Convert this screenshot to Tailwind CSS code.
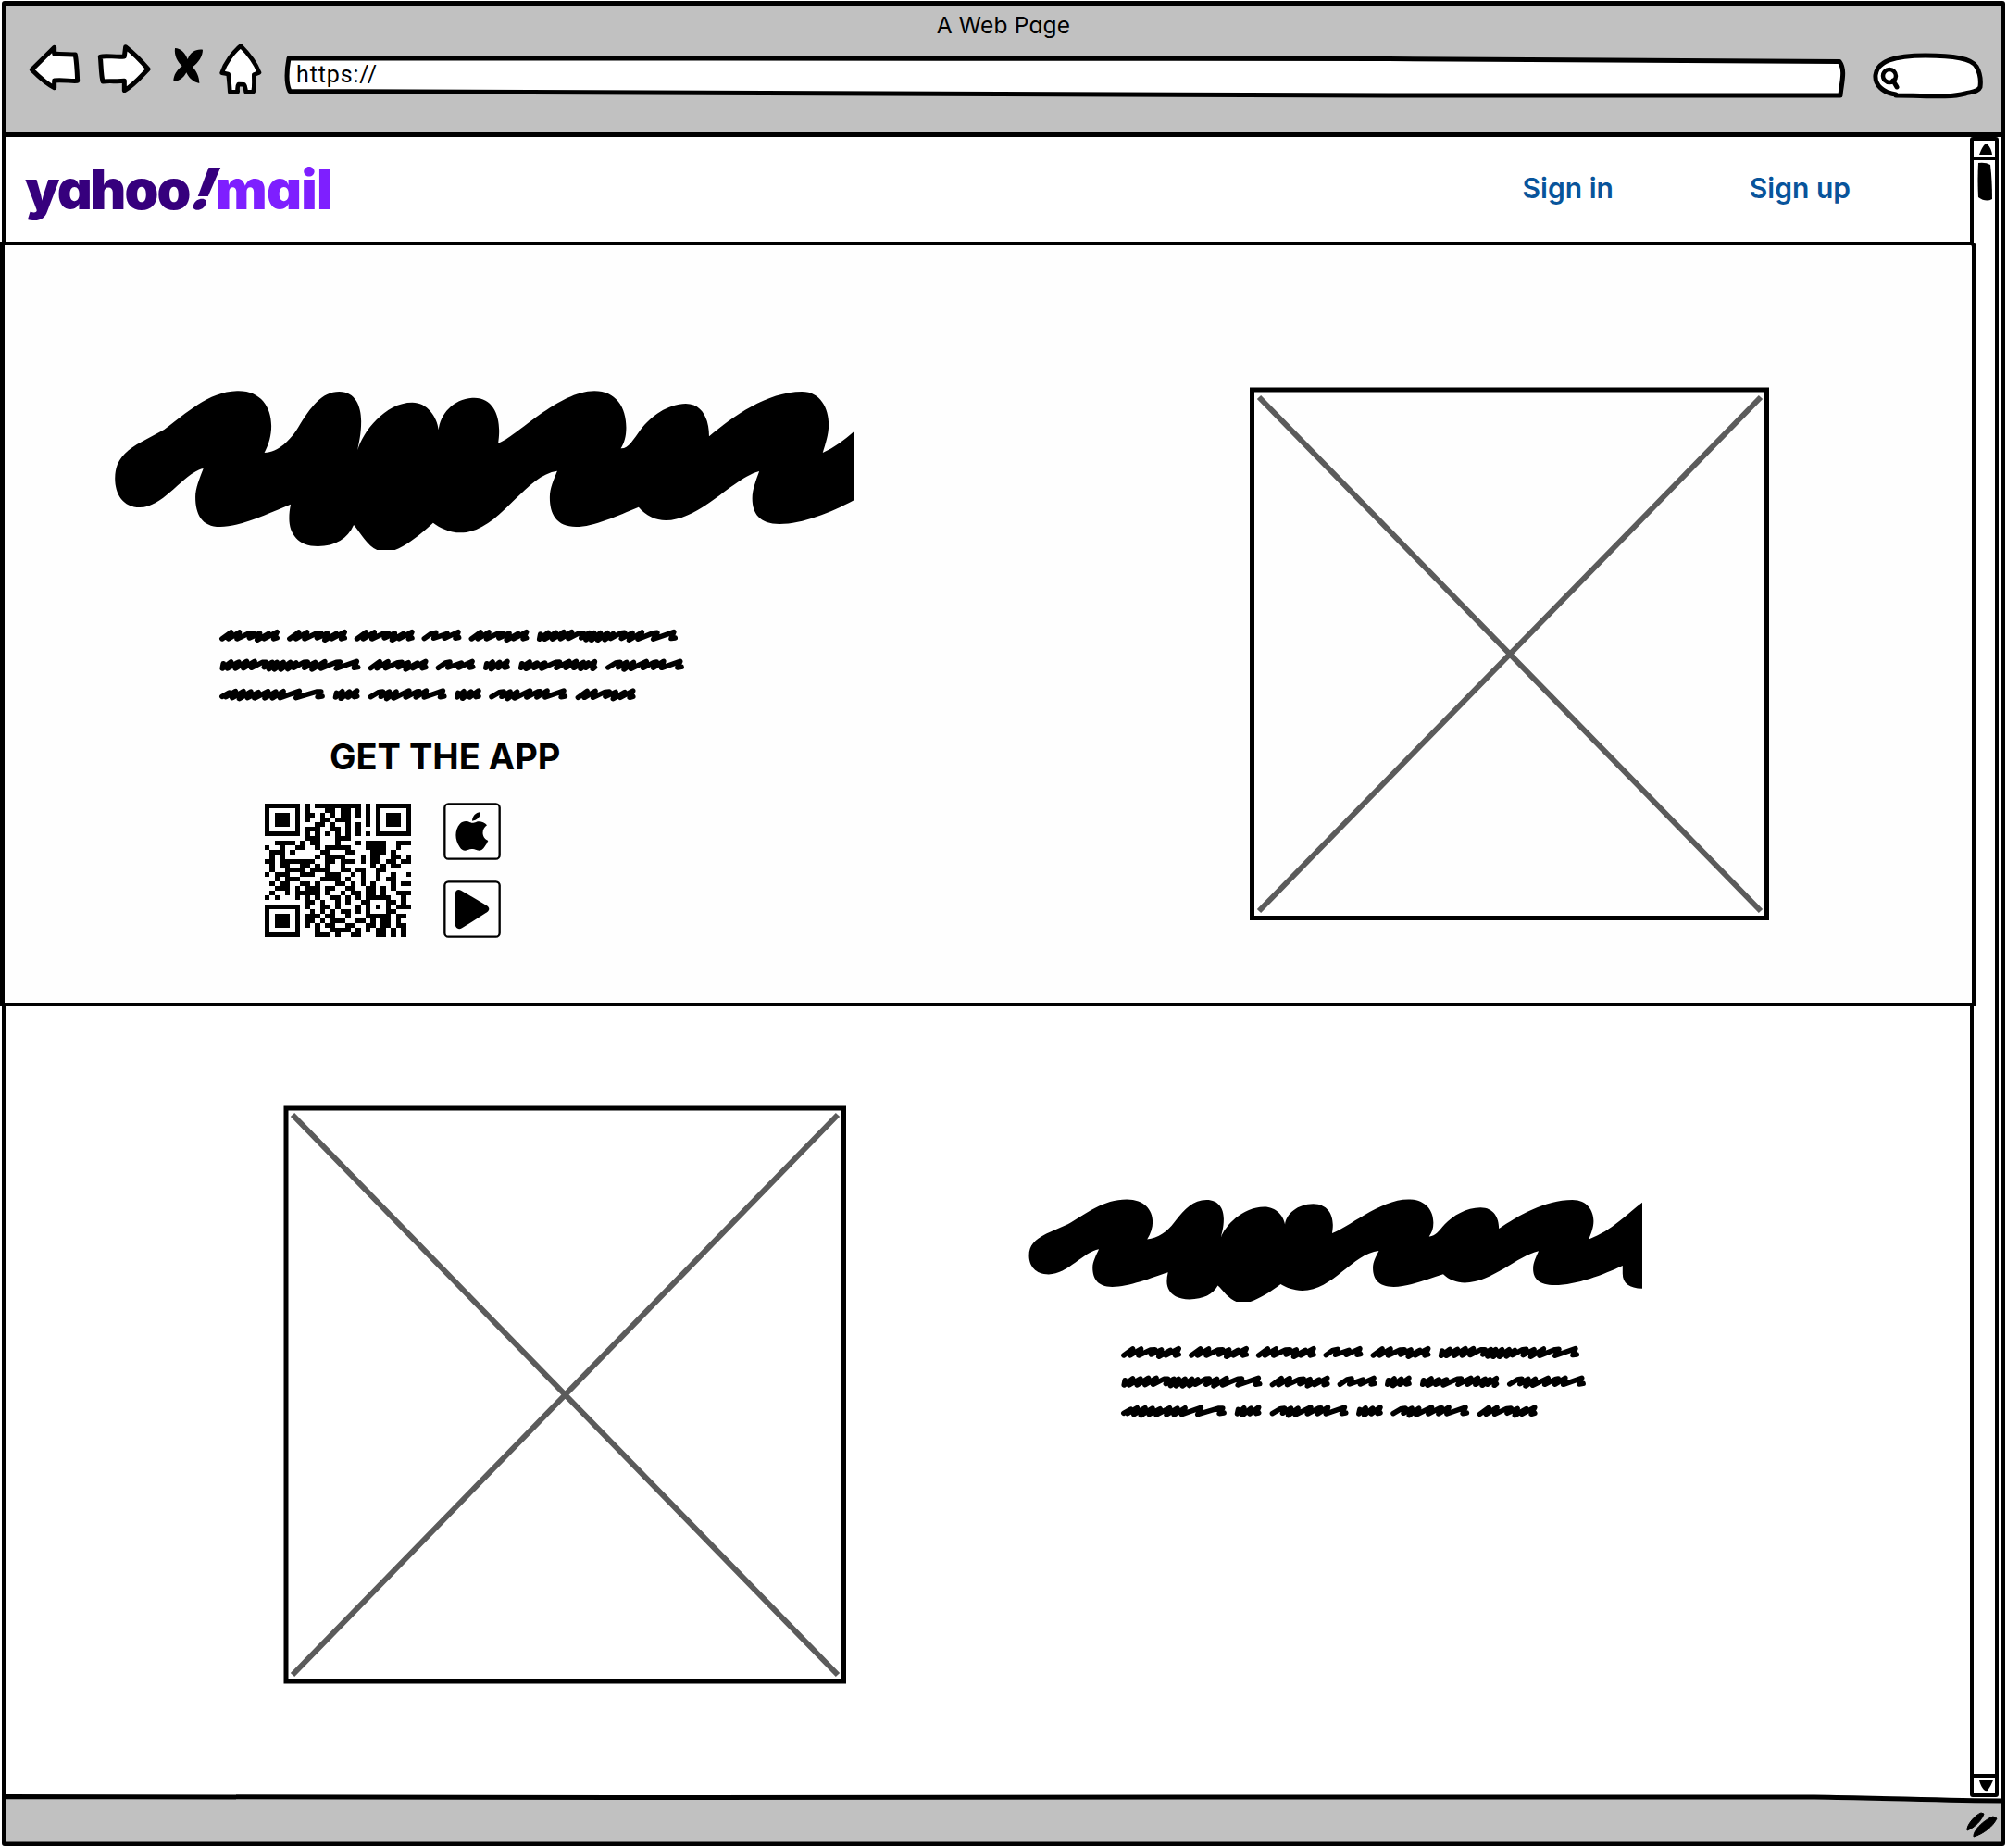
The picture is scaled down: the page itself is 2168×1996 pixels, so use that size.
<!DOCTYPE html>
<html lang="en">
<head>
<meta charset="utf-8">
<title>A Web Page</title>
<script src="https://cdn.jsdelivr.net/npm/@tailwindcss/browser@4"></script>
</head>
<body class="bg-white">
<svg class="hidden">
  <defs>
    <path id="headline" d="M46 350C46 300 60 270 90 240L145 192C190 140 235 67 295 67C340 67 361 120 361 180C361 210 356 240 347 267C375 265 400 225 415 185C440 120 462 69 498 69C530 69 542 115 542 165C542 210 537 235 535 258C545 200 590 104 645 104C675 104 695 150 698 193C701 140 730 89 770 89C805 89 820 140 820 195C820 210 819 225 818 237C855 215 940 67 1012 67C1055 67 1076 120 1076 185C1076 215 1072 235 1065 253C1080 255 1090 225 1105 192C1125 150 1160 108 1196 108C1230 108 1243 160 1243 214C1290 150 1360 69 1430 69C1468 69 1484 125 1484 175C1484 210 1477 240 1472 267C1530 225 1575 130 1608 82V516C1575 514 1558 490 1558 440C1558 425 1558 412 1558 400C1510 445 1440 498 1385 498C1345 498 1330 465 1330 415C1330 385 1338 355 1344 327C1290 350 1225 486 1156 486C1135 486 1115 470 1101 443C1060 470 1010 507 975 507C935 507 922 465 922 412C922 380 930 355 937 326C870 340 820 526 742 526C720 526 700 510 687 494C660 535 630 570 610 582H574C555 570 540 525 527 501C515 545 490 570 455 570C415 570 397 530 397 480C397 465 398 450 400 434C360 460 300 507 258 507C220 507 208 465 208 410C208 380 218 345 224 318C185 330 145 444 96 444C62 444 46 400 46 350Z"/>
    <polyline id="wa" points="8,89 36,68 28,89 62,68 55,89 92,71 106,70 94,86 126,71 118,93 154,72 140,89 180,67 170,89 180,86"/>
    <polyline id="wb" points="8,88 30,72 44,69 38,87 80,72 72,87 114,67 106,87 116,85"/>
    <polyline id="wc" points="12,74 9,90 36,69 25,90 60,69 50,90 85,67 75,89 110,67 100,88 134,70 146,70 140,86 165,70 155,92 180,70 172,93 200,70 192,93 222,70 214,92 240,72 232,88 264,70 276,69 266,88 300,70 290,93 330,68 318,90 366,70 378,69 366,90 430,67 422,88 434,86"/>
    <polyline id="wd" points="12,74 9,88 30,69 26,92 52,70 48,88 76,67 68,87 76,85"/>
    <polyline id="we" points="12,74 9,88 36,69 25,91 60,72 50,88 84,72 74,90 118,70 130,69 120,88 160,67 150,88 182,67 175,88 205,70 196,91 220,72 212,88 240,68 234,91 240,86"/>
    <polyline id="wf" points="8,87 34,71 46,70 40,86 66,70 58,93 88,70 80,91 128,67 118,88 152,70 160,69 150,88 182,67 176,88 234,67 226,87 238,85"/>
    <polyline id="wg" points="8,86 30,73 20,87 50,69 40,90 75,69 62,93 98,70 88,90 122,72 110,91 152,69 142,91 176,70 166,91 200,69 190,90 250,68 240,90 304,70 318,70 308,87 322,85"/>
    <g id="para" fill="none" stroke="#000" stroke-width="16.5" stroke-linecap="round" stroke-linejoin="round">
      <use href="#wa" x="52"/><use href="#wa" x="264"/><use href="#wa" x="475"/><use href="#wb" x="686"/><use href="#wa" x="834"/><use href="#wc" x="1046"/>
      <g transform="translate(0 95.5)"><use href="#wc" x="52"/><use href="#wa" x="518"/><use href="#wb" x="730"/><use href="#wd" x="878"/><use href="#we" x="988"/><use href="#wf" x="1262"/></g>
      <g transform="translate(0 191)"><use href="#wg" x="52"/><use href="#wd" x="407"/><use href="#wf" x="518"/><use href="#wd" x="788"/><use href="#wf" x="897"/><use href="#wa" x="1168"/></g>
    </g>
  </defs>
</svg>

<div class="relative flex h-[1996px] w-[2168px] flex-col overflow-hidden bg-white pt-px pl-[2px] pr-[2px] pb-[2px]">
  <div class="flex min-h-0 flex-1 flex-col rounded-[3px] border-[5px] border-black">

    <header class="flex h-[142px] shrink-0 flex-col border-b-[5px] border-black bg-[#c1c1c1]">
      <h1 class="flex h-[40px] items-center justify-center pt-[2px] font-[Inter] text-[24.5px] tracking-[0.008em] text-black [font-feature-settings:'cv11']">A Web Page</h1>
      <div class="flex items-start">
        <svg class="ml-[23px] h-[54px] w-[58px]" viewBox="90 138 174 162" fill="#fff" stroke="#000" stroke-width="15" stroke-linejoin="round"><path d="M103 226L176 154V174C200 177 225 175 244 177C248 200 250 235 251 262C230 264 205 258 176 261V284C150 272 127 250 103 226Z"/></svg>
        <svg class="ml-[16px] h-[54px] w-[60px]" viewBox="312 138 180 162" fill="#fff" stroke="#000" stroke-width="15" stroke-linejoin="round"><path d="M325 184C340 178 375 186 403 183L407 152C430 170 460 200 480 224C458 246 432 278 403 293V262C380 265 355 261 333 264C327 240 328 210 325 184Z"/></svg>
        <svg class="ml-[22px] mt-[4px] h-[42px] w-[34px]" viewBox="560 150 102 126"><path d="M569 156C588 156 602 172 610 192C618 170 636 158 659 161C659 182 645 203 626 217C638 230 648 248 648 270C629 267 613 252 606 235C597 252 583 264 564 264C564 243 576 226 592 214C577 200 566 180 569 156Z"/></svg>
        <svg class="ml-[16px] h-[56px] w-[48px]" viewBox="708 134 144 168" fill="#fff" stroke="#000" stroke-width="14" stroke-linejoin="round"><path d="M780 145C800 165 828 200 840 231L823 238C823 260 825 275 821 293L797 294C795 283 796 275 791 270L773 269C768 275 770 285 770 293L745 294C744 275 742 255 740 236L719 232C730 200 755 165 780 145Z"/></svg>
        <div class="relative ml-[22px] mt-[12px] h-[50px] w-[1690px]">
          <svg class="absolute inset-0 h-full w-full" viewBox="306 58 1690 50" fill="#fff" stroke="#000" stroke-width="5" stroke-linejoin="round"><path d="M312 63C700 63 1200 63 1500 63.500L1987 66.500C1994 76 1989 90 1988 103H1500C1200 102 800 98.500 313 98.500C308 88 310 74 312 63Z"/></svg>
          <span class="relative block pl-[14px] pt-[5px] font-[Roboto] text-[25px] leading-[36px] tracking-[0.035em] text-black">https://</span>
        </div>
        <svg class="ml-[24px] mt-[9px] h-[54px] w-[124px]" viewBox="2020 55 124 54" fill="#fff" stroke="#000" stroke-width="5" stroke-linecap="round" stroke-linejoin="round"><path d="M2048 102C2034 100 2025 92 2026 81C2028 66 2046 60 2080 60C2110 60 2130 63 2135 72C2139 79 2140 86 2139 94C2137 99 2131 99 2123 101C2105 106 2080 103 2048 103Z"/><circle cx="2041" cy="82" r="7" stroke-width="4.500"/><path d="M2045 87L2049 94" stroke-width="5"/></svg>
      </div>
    </header>

    <div class="flex min-h-0 flex-1">
      <main class="flex w-[2125px] flex-col">
        <nav class="flex h-[113px] shrink-0 items-center text-black">
          <div class="ml-[20px] flex items-baseline pb-[2px] font-[Inter] text-[59px] leading-none font-black [font-feature-settings:'cv11']">
            <span class="w-[171px] tracking-[-0.031em] text-[#36007d]">yahoo</span><span class="inline-block w-[35px] origin-bottom-left -skew-x-[22deg] text-[62px] text-[#36007d]">!</span><span class="tracking-[-0.012em] text-[#7e1fff]">mail</span>
          </div>
          <a class="ml-auto pb-[3px] font-[Inter] text-[30px] font-semibold text-[#08549b]">Sign in</a>
          <a class="ml-[147px] mr-[133px] pb-[3px] font-[Inter] text-[30px] font-semibold text-[#08549b]">Sign up</a>
        </nav>

        <section class="relative -ml-[7px] flex h-[826px] w-[2135px] shrink-0 items-start rounded-tr-[6px] border-x-[5px] border-y-[4px] border-black bg-[#fefefe]">
          <div class="ml-[116px] mt-[155px] w-[802px]">
            <svg class="h-[174px] w-[801px]" viewBox="40 60 1494 522" preserveAspectRatio="none"><use href="#headline"/></svg>
            <svg class="ml-[112px] mt-[83px] h-[83px] w-[510px]" viewBox="40 50 1480 250" preserveAspectRatio="none"><use href="#para"/></svg>
            <h2 class="ml-[235px] mt-[33px] font-[Inter] text-[38px] leading-[48px] font-bold text-black">GET THE APP</h2>
            <div class="ml-[165px] mt-[26px] flex">
              <svg id="qr" class="mt-px h-[144px] w-[158px]" viewBox="0 0 29 29" preserveAspectRatio="none" shape-rendering="crispEdges"></svg>
              <div class="ml-[35px] flex flex-col gap-[22px]">
                <svg class="h-[62px] w-[62px]" viewBox="627 51 186 186"><rect x="631" y="55" width="178" height="178" rx="12" fill="#fff" stroke="#000" stroke-width="7"/><path d="M720 110C721 94 731 83 747 81C748 96 736 109 720 110ZM768 124C760 114 745 110 734 113C726 116 721 118 714 115C702 109 690 110 680 120C664 138 662 170 680 195C687 206 696 208 706 204C717 199 725 201 736 205C749 210 757 200 763 190C768 183 770 178 772 174C750 166 749 136 768 124Z"/></svg>
                <svg class="h-[62px] w-[62px]" viewBox="627 303 186 186"><rect x="631" y="307" width="178" height="178" rx="12" fill="#fff" stroke="#000" stroke-width="7"/><path d="M666 343C666 334 675 330 684 335L768 385C777 391 777 400 768 406L687 457C677 463 666 458 666 448Z"/></svg>
              </div>
            </div>
          </div>
          <svg class="ml-[425px] mt-[152px] h-[577px] w-[564px]" viewBox="1349 417 564 577" fill="none"><path d="M1361 429L1903 984M1903 429L1361 984" stroke="#5b5b5b" stroke-width="6"/><rect x="1353.500" y="421" width="556" height="570.500" stroke="#000" stroke-width="5"/></svg>
        </section>

        <section class="flex items-start">
          <svg class="ml-[297px] mt-[105px] h-[628px] w-[612px]" viewBox="304 1192 612 628" fill="none"><path d="M316 1204L905 1809M905 1204L316 1809" stroke="#5b5b5b" stroke-width="6"/><rect x="309" y="1197" width="602.500" height="619" stroke="#000" stroke-width="5"/></svg>
          <div class="ml-[193px] mt-[207px]">
            <svg class="h-[112px] w-[665px]" viewBox="40 60 1568 522" preserveAspectRatio="none"><use href="#headline"/></svg>
            <svg class="ml-[98px] mt-[45px] h-[83px] w-[510px]" viewBox="40 50 1480 250" preserveAspectRatio="none"><use href="#para"/></svg>
          </div>
        </section>
      </main>

      <aside class="ml-[-4px] flex h-[1793px] w-[31px] shrink-0 flex-col rounded-[3px] border-[4px] border-black">
        <div class="flex h-[21px] items-center justify-center border-b-[3px] border-black"><svg class="ml-[3px] h-[12px] w-[14px]" viewBox="0 0 14 12"><path d="M0 12Q3 4 6 1Q8 0 9 1Q13 5 14 12Z"/></svg></div>
        <svg class="ml-[4px] mt-[2px] h-[42px] w-[17px]" viewBox="0 0 17 42"><path d="M1 1Q9 0 14 3Q16 20 16 40Q9 44 1 38Q0 20 1 1Z"/></svg>
        <div class="mt-auto flex h-[21px] items-center justify-center border-t-[4px] border-black"><svg class="ml-[3px] h-[12px] w-[15px]" viewBox="0 0 15 12"><path d="M0 0H15Q12 7 9 11Q7 12 5 10Q2 7 0 0Z"/></svg></div>
      </aside>
    </div>

    <footer class="relative h-[50px] shrink-0">
      <svg class="absolute -left-px bottom-0 h-[54px] w-[2158px]" viewBox="6 1935 2158 54"><path d="M4 1940.500C400 1943 900 1940.500 1300 1941H1960C2040 1942 2100 1945 2164 1945V1991H4Z" fill="#c1c1c1" stroke="#000" stroke-width="5"/><path d="M2125 1977C2124 1971 2134 1960 2140 1958L2143 1959C2141 1966 2133 1974 2125 1977ZM2132 1984C2131 1976 2146 1964 2153 1962L2157 1964C2153 1973 2142 1981 2132 1984Z" stroke="#000" stroke-width="1"/></svg>
    </footer>
  </div>
</div>
<script>
  const rows = [
    '#######.#.#########.#.#######',
    '#.....#.#...##.##.#.#.#.....#',
    '#.###.#.##.#.#.##.#.#.#.###.#',
    '#.###.#.#..##.###...#.#.###.#',
    '#.###.#...##.#..#.#.#.#.###.#',
    '#.....#.###..##.#.#...#.....#',
    '#######.#.#.#.#.#.#.#.#######',
    '........###...###............',
    '..####.#.##...#...#.####..###',
    '#..#..##..#.#####...####..#..',
    '.###.#.....##...##...###.#...',
    '.#.#......#.####...#.##..##.#',
    '##.#######..##.###.#.##.##.##',
    '.#.##..##.#.#..#.....#.#.##..',
    '.#..####.####..##.##..##.....',
    '#.###..###..###..#.#..#..#..#',
    '..#.###....####.#..#..#.##...',
    '.#.##..##.#...##.#.#.#...#.##',
    '..###.#.###.##..##..##.#.#...',
    '.#..#.#####.#..#.##.##.#..###',
    '#.#...#.#.#..##.#.#.#####..#.',
    '........##.#..#.#..##...##.#.',
    '#######.#..##.#...#.#.#.#.###',
    '#.....#..#.#.#.##.#.#...##...',
    '#.###.#.###.##..#...#####.##.',
    '#.###.#.##.#.###..##.#.##.#..',
    '#.###.#.#.#.##..##..##.##.##.',
    '#.....#...#..####.#.#.##.#.#.',
    '#######...###.#..##...##.#.#.'
  ];
  let d = '';
  rows.forEach((r, y) => [...r].forEach((c, x) => { if (c === '#') d += `M${x} ${y}h1v1h-1z`; }));
  const p = document.createElementNS('http://www.w3.org/2000/svg', 'path');
  p.setAttribute('d', d);
  document.getElementById('qr').append(p);
</script>
</body>
</html>
